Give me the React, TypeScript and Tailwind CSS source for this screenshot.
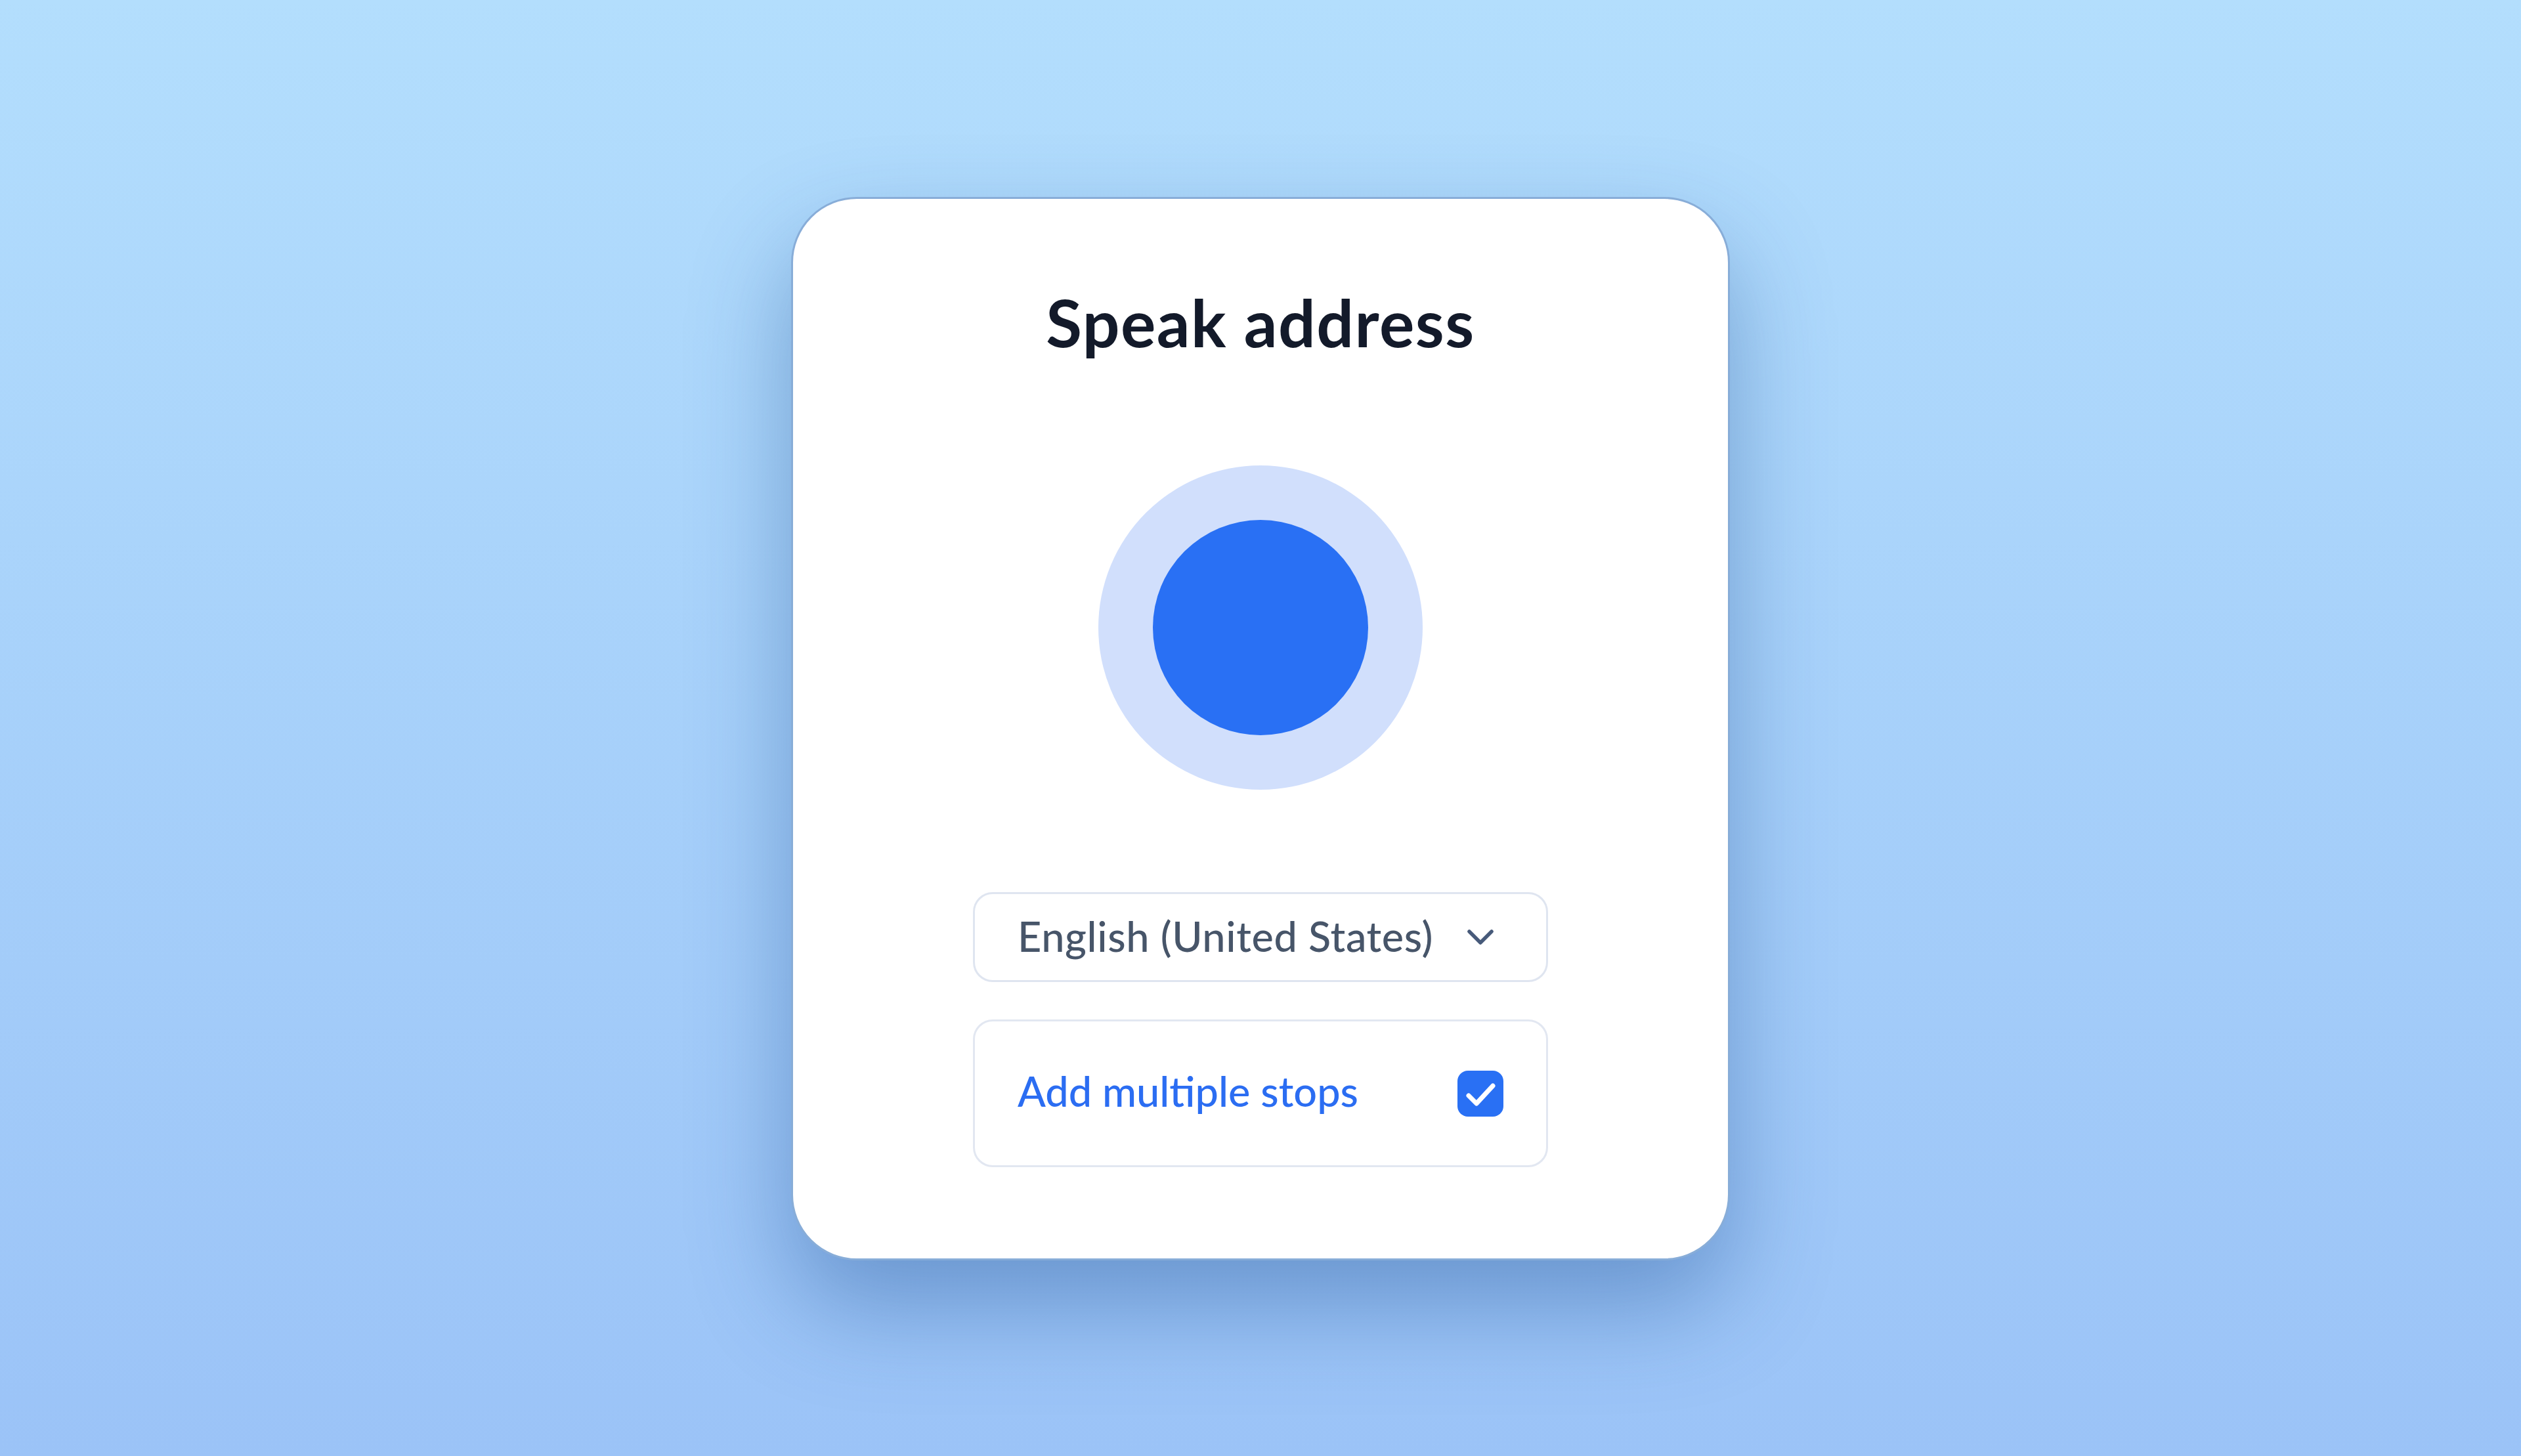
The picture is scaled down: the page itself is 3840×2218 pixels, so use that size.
export default function App() {
  return (
    <div className="h-screen w-full overflow-hidden flex items-start justify-center bg-linear-to-b from-[#b3defd] to-[#9bc3f7] pt-[300px] font-[Lato,sans-serif]">
      <div className="w-[1430px] h-[1620px] bg-white rounded-[100px] border-[3px] border-[#88add8] shadow-[0_70px_150px_rgba(30,80,150,0.42)] flex flex-col items-center pt-[137px]">
        <h1 className="text-[100px] leading-none font-bold tracking-[0.015em] text-[#131a2a]">Speak address</h1>
        <div className="mt-[169px] w-[494px] h-[494px] rounded-full bg-[#d1dffc] flex items-center justify-center">
          <div className="w-[328px] h-[328px] rounded-full bg-[#2970f4]" />
        </div>
        <div className="mt-[156px] w-[876px] h-[137px] rounded-[30px] border-[3px] border-[#dfe5f0] flex items-center justify-between px-[65px]">
          <span className="mb-[4px] text-[63px] leading-none font-medium tracking-[0.01em] text-[#475569]">English (United States)</span>
          <div className="w-[70px] flex justify-center">
            <svg width="40" height="23" viewBox="0 0 40 23" fill="none">
              <polyline points="3,3 20,20 37,3" stroke="#475a7a" strokeWidth="5.5" strokeLinecap="round" strokeLinejoin="round" />
            </svg>
          </div>
        </div>
        <div className="mt-[57px] w-[876px] h-[225px] rounded-[30px] border-[3px] border-[#e2e7f1] flex items-center justify-between px-[65px]">
          <span className="mb-[8px] text-[63px] leading-none font-medium text-[#2b6df2]">Add multiple stops</span>
          <div className="w-[70px] h-[70px] rounded-[16px] bg-[#2970f4] flex items-center justify-center">
            <svg width="70" height="70" viewBox="0 0 70 70" fill="none">
              <polyline points="17,38 29,50 54,23" stroke="white" strokeWidth="7" strokeLinecap="round" strokeLinejoin="round" />
            </svg>
          </div>
        </div>
      </div>
    </div>
  );
}
